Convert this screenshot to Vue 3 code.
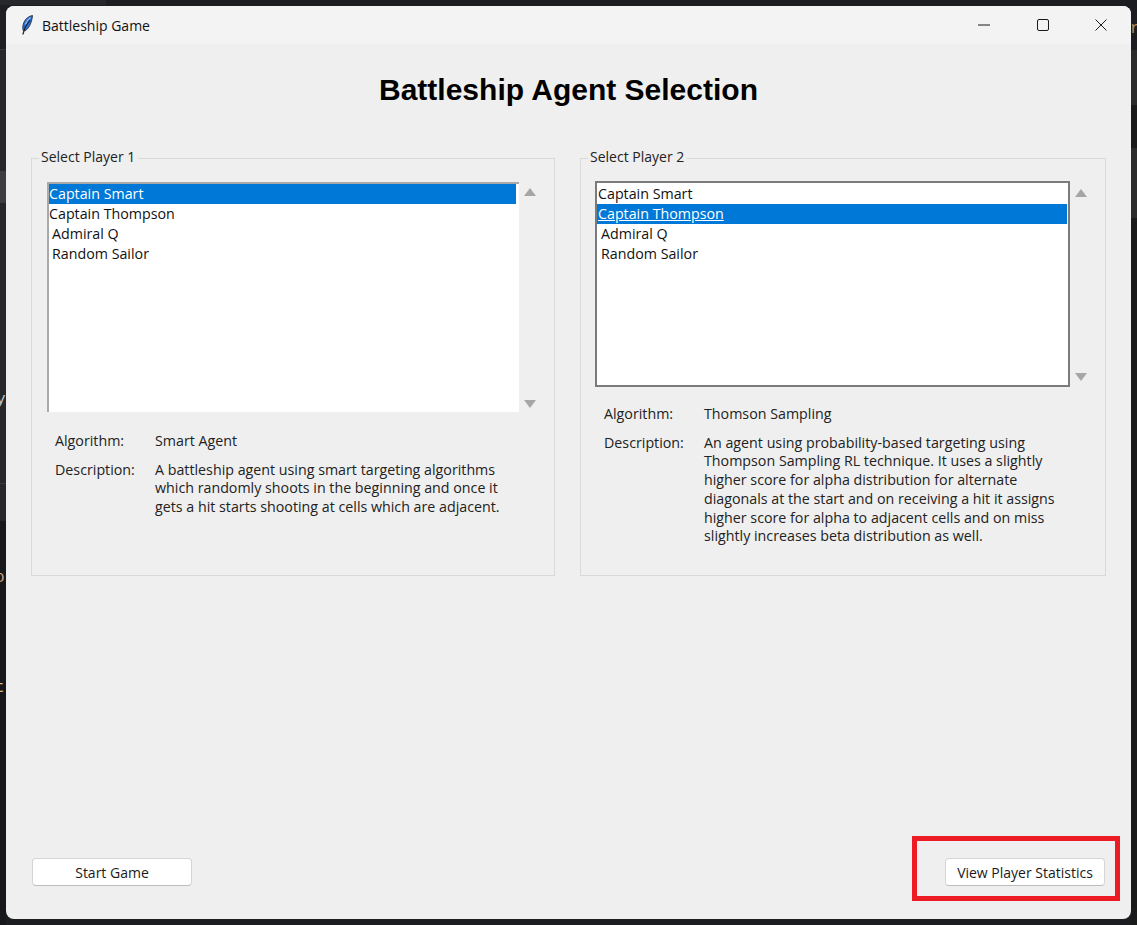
<script setup>
const agents = ['Captain Smart', 'Captain Thompson', 'Admiral Q', 'Random Sailor']

const panels = [
  {
    id: 'one',
    legend: 'Select Player 1',
    selected: 0,
    algorithm: 'Smart Agent',
    lines: [
      'A battleship agent using smart targeting algorithms',
      'which randomly shoots in the beginning and once it',
      'gets a hit starts shooting at cells which are adjacent.'
    ]
  },
  {
    id: 'two',
    legend: 'Select Player 2',
    selected: 1,
    algorithm: 'Thomson Sampling',
    lines: [
      'An agent using probability-based targeting using',
      'Thompson Sampling RL technique. It uses a slightly',
      'higher score for alpha distribution for alternate',
      'diagonals at the start and on receiving a hit it assigns',
      'higher score for alpha to adjacent cells and on miss',
      'slightly increases beta distribution as well.'
    ]
  }
]
</script>

<template>
  <div class="desktop">
    <!-- bits of the editor behind the window that stick out at the edges -->
    <span class="peek y">y</span>
    <span class="peek o">o</span>
    <span class="peek t">t</span>
    <span class="peek r">r</span>

    <div class="window">
      <header class="titlebar">
        <svg class="feather" width="12" height="20" viewBox="0 0 12 20">
          <path d="M11.500 .5C8 1 4.500 3.500 2.800 7.500 1.600 10.500 1.500 13.500 2.200 15.500l2 .2C7.500 14 10.800 8 11.500 .5z" fill="#2f6fd0" stroke="#22324a" stroke-width=".9" />
          <path d="M9.500 2.500C7.500 4 5.500 6.500 4.500 9.500" fill="none" stroke="#8fbdf0" stroke-width="1.300" />
          <path d="M9 5 4.300 12 1.800 19.500" fill="none" stroke="#18212e" stroke-width="1.200" />
        </svg>
        <span class="title">Battleship Game</span>
        <div class="controls">
          <svg width="12" height="12" viewBox="0 0 12 12"><path d="M0 6h12" stroke="#1a1a1a" fill="none" /></svg>
          <svg width="12" height="12" viewBox="0 0 12 12"><rect x="0.500" y="0.500" width="11" height="11" rx="1.500" stroke="#1a1a1a" fill="none" /></svg>
          <svg width="12" height="12" viewBox="0 0 12 12"><path d="M.5.5l11 11M11.500.5l-11 11" stroke="#1a1a1a" fill="none" /></svg>
        </div>
      </header>

      <main class="content">
        <h1>Battleship Agent Selection</h1>

        <div class="panels">
          <fieldset v-for="panel in panels" :key="panel.id" class="panel" :class="panel.id">
            <legend>{{ panel.legend }}</legend>
            <div class="picker">
              <ul class="list">
                <li
                  v-for="(agent, i) in agents"
                  :key="agent"
                  :class="{ selected: i === panel.selected, active: i === panel.selected && panel.id === 'two', indent: i > 1 }"
                >{{ agent }}</li>
              </ul>
              <div class="scroll">
                <span class="arrow up"></span>
                <span class="arrow down"></span>
              </div>
            </div>
            <dl class="info">
              <dt>Algorithm:</dt>
              <dd>{{ panel.algorithm }}</dd>
              <dt>Description:</dt>
              <dd class="desc"><span v-for="line in panel.lines" :key="line">{{ line }}</span></dd>
            </dl>
          </fieldset>
        </div>

        <footer class="actions">
          <button class="start">Start Game</button>
          <button class="stats">View Player Statistics</button>
        </footer>
      </main>
    </div>
    <div class="highlight"></div>
  </div>
</template>

<style>
html, body {
  margin: 0;
  background: #1c1d20;
}
</style>

<style scoped>
.desktop {
  position: relative;
  width: 1137px;
  height: 925px;
  padding: 6px;
  box-sizing: border-box;
  background:
    linear-gradient(#25272a, #25272a) 0 0 / 106px 5px no-repeat,
    linear-gradient(#1e1f22 0 49px, #34363a 49px 50px, #25272b 50px 171px, #3c3d40 171px 203px, #25272b 203px 483px, #36383b 483px 484px, #25272b 484px 521px, #17181b 521px) 0 0 / 6px 925px no-repeat,
    linear-gradient(#1c1d20 0 50px, #2b2b2c 50px 105px, #1a1a1b 105px 148px, #2b2b2c 148px 218px, #1a1a1b 218px) 100% 0 / 6px 925px no-repeat,
    #1c1d20;
  font-family: "Open Sans", "Noto Sans", sans-serif;
  font-size: 14px;
  color: #111;
  overflow: hidden;
}

.peek {
  position: absolute;
  font-family: "Liberation Mono", monospace;
  font-size: 16px;
  line-height: 18px;
}

.peek.y {
  left: -4px;
  top: 391px;
  color: #b9c4d0;
}

.peek.o {
  left: -5px;
  top: 569px;
  color: #c8a27a;
}

.peek.t {
  left: -5px;
  top: 679px;
  color: #d9b48a;
}

.peek.r {
  left: 1130px;
  top: 20px;
  color: #c08a50;
}

.window {
  position: relative;
  height: 913px;
  display: flex;
  flex-direction: column;
  background: #efefef;
  border-radius: 8px;
  overflow: hidden;
}

.titlebar {
  height: 38px;
  flex: none;
  display: flex;
  align-items: center;
  padding-left: 15px;
  background: #f3f3f3;
}

.feather {
  margin-right: 9px;
}

.title {
  font-size: 14px;
}

.controls {
  margin-left: auto;
  width: 129px;
  margin-right: 24px;
  display: flex;
  align-items: center;
  justify-content: space-between;
}

.content {
  flex: 1;
  display: flex;
  flex-direction: column;
  padding: 0 25px 33px 25px;
}

h1 {
  margin: 28px 0 0;
  height: 36px;
  font-family: "Liberation Sans", Arial, sans-serif;
  font-size: 30px;
  line-height: 36px;
  font-weight: 700;
  text-align: center;
  color: #000;
}

.panels {
  display: flex;
  gap: 25px;
  margin-top: 39px;
}

.panel {
  margin: 0;
  min-width: 0;
  height: 429px;
  box-sizing: border-box;
  border: 1px solid #d9d9d9;
  padding: 13px 0 0 15px;
}

.panel.one {
  width: 524px;
}

.panel.two {
  width: 526px;
  padding-left: 14px;
}

legend {
  margin-left: -8px;
  padding: 0 3px 2px 2px;
  font-size: 14px;
  line-height: 20px;
  color: #222;
}

.two legend {
  margin-left: -7px;
}

.picker {
  display: flex;
}

.two .picker {
  margin-top: -1px;
}

.list {
  margin: 0;
  padding: 0;
  list-style: none;
  background: #fff;
  box-sizing: border-box;
  font-size: 14.25px;
}

.one .list {
  width: 472px;
  height: 230px;
  padding: 0 3px 0 0;
  border-left: 2px solid #a9a9a9;
  border-top: 2px solid #a9a9a9;
}

.two .list {
  width: 475px;
  height: 206px;
  padding: 1px 1px 0 0;
  border: 2px solid #7b7b7b;
}

.list li {
  height: 20px;
  line-height: 20px;
  white-space: nowrap;
}

.two .list li {
  padding-left: 1px;
}

.one .list li.indent {
  padding-left: 3px;
}

.two .list li.indent {
  padding-left: 4px;
}

.list li.selected {
  background: #0078d7;
  color: #fff;
}

.list li.active {
  text-decoration: underline;
}

.scroll {
  display: flex;
  flex-direction: column;
  justify-content: space-between;
  align-items: center;
  width: 26px;
  margin-left: -2px;
  padding: 6px 0 4px;
  box-sizing: border-box;
}

.two .scroll {
  padding: 8px 0 6px;
}

.arrow {
  width: 0;
  height: 0;
  border-left: 6px solid transparent;
  border-right: 6px solid transparent;
}

.arrow.up {
  border-bottom: 8px solid #a6a6a6;
}

.arrow.down {
  border-top: 8px solid #a6a6a6;
}

.info {
  margin: 20px 0 0 8px;
  display: grid;
  grid-template-columns: 100px 1fr;
  row-gap: 10px;
  line-height: 18.7px;
  font-size: 14.25px;
}

.two .info {
  margin: 18px 0 0 9px;
}

.info dt,
.info dd {
  margin: 0;
  color: #222;
}

.desc span {
  display: block;
  white-space: nowrap;
}

.actions {
  margin-top: auto;
  display: flex;
  justify-content: space-between;
}

button {
  height: 28px;
  box-sizing: border-box;
  background: #fff;
  border: 1px solid #d5d5d5;
  border-bottom-color: #bdbdbd;
  border-radius: 4px;
  padding: 0;
  font: inherit;
  color: #1a1a1a;
}

.start {
  width: 160px;
  margin-left: 1px;
}

.stats {
  width: 160px;
  margin-right: 1px;
}

.highlight {
  position: absolute;
  left: 912px;
  top: 836px;
  width: 208px;
  height: 65px;
  box-sizing: border-box;
  border: 5px solid #ed1c24;
}
</style>
